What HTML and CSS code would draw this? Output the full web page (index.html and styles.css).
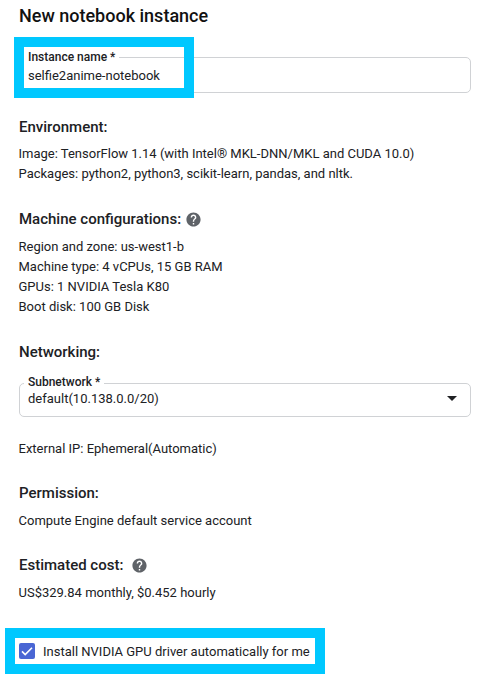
FILE: index.html
```html
<!DOCTYPE html>
<html lang="en">
<head>
  <meta charset="UTF-8">
  <meta name="viewport" content="width=device-width, initial-scale=1">
  <title>New notebook instance</title>
  <link rel="stylesheet" href="styles.css">
</head>
<body>

  <div class="page">
    <h1 class="title">New notebook instance</h1>

    <div class="field name-field">
      <span class="field-label">Instance name *</span>
      <span class="field-value">selfie2anime-notebook</span>
      <div class="highlight name-highlight"></div>
    </div>

    <h2 class="heading env-heading">Environment:</h2>
    <p class="info">Image: TensorFlow 1.14 (with Intel® MKL-DNN/MKL and CUDA 10.0)</p>
    <p class="info">Packages: python2, python3, scikit-learn, pandas, and nltk.</p>

    <h2 class="heading machine-heading">
      Machine configurations:
      <svg class="help" viewBox="0 0 24 24"><path d="M12 2C6.48 2 2 6.48 2 12s4.48 10 10 10 10-4.48 10-10S17.52 2 12 2zm1 17h-2v-2h2v2zm2.07-7.75l-.9.92C13.45 12.9 13 13.5 13 15h-2v-.5c0-1.1.45-2.1 1.17-2.83l1.24-1.26c.37-.36.59-.86.59-1.41 0-1.1-.9-2-2-2s-2 .9-2 2H8c0-2.21 1.79-4 4-4s4 1.79 4 4c0 .88-.36 1.68-.93 2.25z"/></svg>
    </h2>
    <p class="info">Region and zone: us-west1-b</p>
    <p class="info">Machine type: 4 vCPUs, 15 GB RAM</p>
    <p class="info">GPUs: 1 NVIDIA Tesla K80</p>
    <p class="info">Boot disk: 100 GB Disk</p>

    <h2 class="heading network-heading">Networking:</h2>
    <div class="field subnet-field">
      <span class="field-label">Subnetwork *</span>
      <span class="field-value">default(10.138.0.0/20)</span>
      <span class="arrow"></span>
    </div>
    <p class="info ip-line">External IP: Ephemeral(Automatic)</p>

    <h2 class="heading perm-heading">Permission:</h2>
    <p class="info">Compute Engine default service account</p>

    <h2 class="heading cost-heading">
      Estimated cost:
      <svg class="help cost-help" viewBox="0 0 24 24"><path d="M12 2C6.48 2 2 6.48 2 12s4.48 10 10 10 10-4.48 10-10S17.52 2 12 2zm1 17h-2v-2h2v2zm2.07-7.75l-.9.92C13.45 12.9 13 13.5 13 15h-2v-.5c0-1.1.45-2.1 1.17-2.83l1.24-1.26c.37-.36.59-.86.59-1.41 0-1.1-.9-2-2-2s-2 .9-2 2H8c0-2.21 1.79-4 4-4s4 1.79 4 4c0 .88-.36 1.68-.93 2.25z"/></svg>
    </h2>
    <p class="info">US$329.84 monthly, $0.452 hourly</p>

    <div class="gpu-box">
      <svg class="checkbox" viewBox="0 0 16 16"><rect width="16" height="16" rx="2" fill="#4a66d4"/><path d="M3 8.4l3.2 3.2L13 4.8" fill="none" stroke="#fff" stroke-width="1.6"/></svg>
      <span>Install NVIDIA GPU driver automatically for me</span>
    </div>
  </div>

</body>
</html>
```

FILE: styles.css
```css
* {
  box-sizing: border-box;
}

body {
  margin: 0;
  background-color: #ffffff;
  color: #202124;
  font-family: Roboto, Arial, sans-serif;
  font-size: 13px;
}

.page {
  width: 488px;
  height: 679px;
  padding: 5px 17px 0 19px;
  overflow: hidden;
}

.title {
  margin: 0;
  font-size: 18px;
  font-weight: 500;
  line-height: 22px;
  color: #111111;
}

.heading {
  margin: 0 0 8px;
  font-size: 15px;
  font-weight: 500;
  line-height: 20px;
  display: flex;
  align-items: center;
}

.env-heading {
  margin-top: 24px;
  margin-bottom: 7px;
}

.machine-heading {
  margin-top: 25px;
}

.network-heading {
  margin-top: 25px;
  margin-bottom: 0;
}

.perm-heading {
  margin-top: 24px;
}

.cost-heading {
  margin-top: 24px;
}

.help {
  width: 17px;
  height: 17px;
  margin-left: 4px;
  fill: #5f6368;
}

.cost-help {
  margin-left: 8px;
}

.info {
  margin: 0 0 0 -0.5px;
  line-height: 20px;
}

.ip-line {
  margin-top: 22px;
}

.field {
  position: relative;
  height: 36px;
  border: 1px solid #d0d2d5;
  border-radius: 5px;
  padding: 0 8px;
  display: flex;
  align-items: center;
}

.name-field {
  margin-top: 30px;
}

.subnet-field {
  margin-top: 21px;
  height: 34px;
  padding-bottom: 3px;
}

.field-label {
  position: absolute;
  left: 4px;
  top: -9px;
  padding: 0 4px;
  background-color: #ffffff;
  font-size: 12px;
  font-weight: 500;
  line-height: 16px;
  z-index: 1;
}

.subnet-field .field-label {
  top: -10px;
}

.field-value {
  position: relative;
  z-index: 1;
}

.arrow {
  margin-left: auto;
  margin-right: 5px;
  border-left: 5px solid transparent;
  border-right: 5px solid transparent;
  border-top: 5px solid #202124;
}

/* blue annotation boxes drawn over the form */
.highlight {
  position: absolute;
  border: 10px solid #00c8ff;
}

.name-highlight {
  left: -6px;
  top: -21px;
  width: 180px;
  height: 61px;
}

.gpu-box {
  position: absolute;
  left: 5px;
  top: 628px;
  width: 320px;
  height: 46px;
  border: 10px solid #00c8ff;
  padding-left: 4px;
  display: flex;
  align-items: center;
  gap: 8px;
}

.checkbox {
  width: 16px;
  height: 16px;
}
```
